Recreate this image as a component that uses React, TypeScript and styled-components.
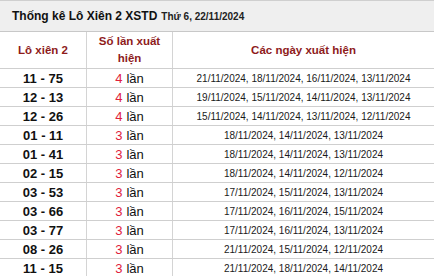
import styled, { createGlobalStyle } from "styled-components";

const GlobalStyle = createGlobalStyle`
  body {
    margin: 0;
    background: #fff;
    font-family: 'Liberation Sans', Arial, sans-serif;
  }
`

const rows = [
    {pair: '11 - 75', count: 4, dates: '21/11/2024, 18/11/2024, 16/11/2024, 13/11/2024'},
    {pair: '12 - 13', count: 4, dates: '19/11/2024, 15/11/2024, 14/11/2024, 13/11/2024'},
    {pair: '12 - 26', count: 4, dates: '15/11/2024, 14/11/2024, 13/11/2024, 12/11/2024'},
    {pair: '01 - 11', count: 3, dates: '18/11/2024, 14/11/2024, 13/11/2024'},
    {pair: '01 - 41', count: 3, dates: '18/11/2024, 14/11/2024, 13/11/2024'},
    {pair: '02 - 15', count: 3, dates: '18/11/2024, 14/11/2024, 12/11/2024'},
    {pair: '03 - 53', count: 3, dates: '17/11/2024, 15/11/2024, 13/11/2024'},
    {pair: '03 - 66', count: 3, dates: '17/11/2024, 16/11/2024, 15/11/2024'},
    {pair: '03 - 77', count: 3, dates: '17/11/2024, 16/11/2024, 13/11/2024'},
    {pair: '08 - 26', count: 3, dates: '21/11/2024, 15/11/2024, 12/11/2024'},
    {pair: '11 - 15', count: 3, dates: '21/11/2024, 18/11/2024, 14/11/2024'},
]

export default function App() {
    return (
        <>
            <GlobalStyle/>
            <StyledStats>
                <TitleBar>
                    <Title>Thống kê Lô Xiên 2 XSTD</Title>
                    <TitleDate>Thứ 6, 22/11/2024</TitleDate>
                </TitleBar>
                <HeadRow>
                    <HeadCell>Lô xiên 2</HeadCell>
                    <HeadCell>Số lần xuất hiện</HeadCell>
                    <HeadCell $last>Các ngày xuất hiện</HeadCell>
                </HeadRow>
                {rows.map(r => (
                    <Row key={r.pair}>
                        <PairCell>{r.pair}</PairCell>
                        <CountCell><CountNum>{r.count}</CountNum> lần</CountCell>
                        <DatesCell>{r.dates}</DatesCell>
                    </Row>
                ))}
            </StyledStats>
        </>
    )
}

const StyledStats = styled.div`
  width: 434px;
  overflow: hidden;
`

const TitleBar = styled.div`
  display: flex;
  align-items: baseline;
  gap: 4px;
  height: 30px;
  line-height: 30px;
  padding-left: 12px;
  background: #efefef;
  border-top: 1px solid #cfcfcf;
  border-bottom: 1px solid #c8c8c8;
`

const Title = styled.span`
  color: #111;
  font-size: 12px;
  font-weight: 700;
`

const TitleDate = styled.span`
  color: #222;
  font-size: 10px;
  font-weight: 700;
`

const gridCols = `87px 86px 1fr`

const HeadRow = styled.div`
  display: grid;
  grid-template-columns: ${gridCols};
  height: 36px;
  border-bottom: 1px solid #cfcfcf;
`

const HeadCell = styled.div<{ $last?: boolean }>`
  display: flex;
  align-items: center;
  justify-content: center;
  text-align: center;
  padding: 0 4px;
  color: #8e1b1b;
  font-size: 11.5px;
  font-weight: 700;
  line-height: 17px;
  border-right: ${p => p.$last ? 'none' : '1px solid #d4d4d4'};
`

const Row = styled.div`
  display: grid;
  grid-template-columns: ${gridCols};
  height: 18px;
  border-bottom: 1px solid #cfcfcf;
`

const Cell = styled.div`
  display: flex;
  align-items: center;
  justify-content: center;
  white-space: nowrap;
`

const PairCell = styled(Cell)`
  color: #111;
  font-size: 13px;
  font-weight: 700;
  border-right: 1px solid #d4d4d4;
`

const CountCell = styled(Cell)`
  gap: 4px;
  color: #111;
  font-size: 13px;
  border-right: 1px solid #d4d4d4;
`

const CountNum = styled.span`
  color: #e0203c;
`

const DatesCell = styled(Cell)`
  color: #1a1a1a;
  font-size: 10px;
`
